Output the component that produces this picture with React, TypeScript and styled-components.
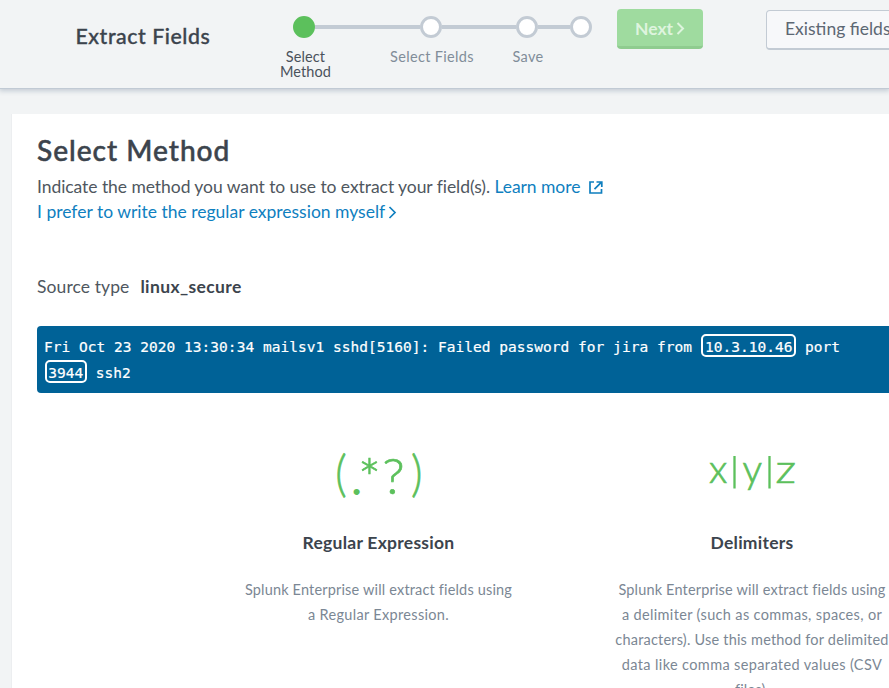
import React from 'react';
import styled, { createGlobalStyle } from 'styled-components';

const GlobalStyle = createGlobalStyle`
  * { box-sizing: border-box; }
  html, body { margin: 0; height: 688px; overflow: hidden; background: #f2f4f5; }
  body { font-family: Lato, "Open Sans", sans-serif; font-size: 17.5px; line-height: 25px; color: #3c444d; }
`;

const Page = styled.div`
  width: 889px;
  height: 688px;
  overflow: hidden;
  display: flex;
  flex-direction: column;
`;

const Header = styled.header`
  flex: none;
  height: 88px;
  display: flex;
  align-items: flex-start;
  box-shadow: 0 1px 0 #c1cad4, 0 2px 5px 1px #c3cbd4;
`;

const AppTitle = styled.h1`
  flex: none;
  margin: 23px 0 0;
  padding-left: 75.5px;
  width: 258px;
  font-size: 21.3px;
  line-height: 26px;
  font-weight: 500;
  letter-spacing: 0.55px;
  -webkit-text-stroke: 0.35px currentColor;
  white-space: nowrap;
`;

const Wizard = styled.nav`
  flex: none;
  width: 359px;
  padding-top: 16px;
`;

const Track = styled.div`
  display: flex;
  align-items: center;
  padding-left: 35px;
`;

const Dot = styled.span<{ $active?: boolean }>`
  flex: none;
  width: 22px;
  height: 22px;
  border-radius: 50%;
  border: 3px solid ${(p) => (p.$active ? '#5cc05c' : '#c3cbd4')};
  background: ${(p) => (p.$active ? '#5cc05c' : '#fff')};
`;

const Connector = styled.span<{ $length: number }>`
  flex: none;
  width: ${(p) => p.$length}px;
  height: 4px;
  background: #c3cbd4;
`;

const Labels = styled.div`
  display: flex;
  margin-top: 11px;
`;

const StepLabel = styled.span<{ $width: number; $active?: boolean }>`
  flex: none;
  width: ${(p) => p.$width}px;
  text-align: center;
  white-space: nowrap;
  font-size: 14.5px;
  line-height: 15px;
  letter-spacing: ${(p) => (p.$active ? 0.1 : 0.33)}px;
  color: ${(p) => (p.$active ? '#4a525b' : '#818d99')};
`;

const NextButton = styled.button`
  flex: none;
  margin: 9px 63px 0 0;
  width: 86px;
  height: 40px;
  border: 0;
  border-bottom: 3px solid #8fcc8f;
  border-radius: 4px;
  background: #9fdb9f;
  color: #def4de;
  display: flex;
  align-items: center;
  justify-content: center;
  gap: 3px;
  padding: 1px 0 0;
  font: 700 17.5px Lato, sans-serif;
`;

const ExistingButton = styled.button`
  flex: none;
  margin-top: 10px;
  width: 180px;
  height: 40px;
  padding: 0 0 3px 18px;
  text-align: left;
  border: 1px solid #c3cbd4;
  border-bottom-width: 2px;
  border-radius: 4px;
  background: #f7f8fa;
  color: #5c6773;
  font: 400 17.5px Lato, sans-serif;
  white-space: nowrap;
`;

const Panel = styled.main`
  flex: 1;
  margin: 26px 0 0 12px;
  padding: 19px 0 0 25px;
  background: #fff;
  box-shadow: -1px 0 0 #eceef0;
`;

const Heading = styled.h2`
  margin: 0 0 7px;
  font-size: 28.1px;
  line-height: 34px;
  font-weight: 500;
  letter-spacing: 0.98px;
  -webkit-text-stroke: 0.5px currentColor;
`;

const Line = styled.p<{ $spacing?: number }>`
  margin: 0;
  white-space: nowrap;
  color: #4f5760;
  letter-spacing: ${(p) => p.$spacing ?? 0}px;
`;

const Link = styled.a`
  color: #0f7fbf;
  text-decoration: none;
`;

const LinkIcon = styled.svg<{ $gap: number }>`
  margin-left: ${(p) => p.$gap}px;
  vertical-align: -1px;
`;

const SourceType = styled.div`
  margin-top: 50px;
  display: flex;
  gap: 11px;
  color: #4f5760;
  letter-spacing: 0.09px;
`;

const SourceValue = styled.strong`
  font-weight: 700;
  color: #3c444d;
  letter-spacing: 0.38px;
`;

const LogEvent = styled.div`
  margin-top: 27px;
  height: 67px;
  padding: 8px 0 0 7px;
  border-radius: 4px 0 0 4px;
  background: #006297;
  color: #fff;
  font: 14.5px/26px "DejaVu Sans Mono", monospace;
  letter-spacing: 0.026px;
  -webkit-text-stroke: 0.2px currentColor;
  white-space: nowrap;
`;

const Token = styled.span`
  display: inline-block;
  margin-left: 0.5px;
  padding: 3px 1.7px 0;
  line-height: 16px;
  border: 2px solid #fff;
  border-radius: 5px;
`;

const Methods = styled.div`
  margin: 52px 0 0 201.5px;
  display: grid;
  grid-template-columns: 280px 280px;
  column-gap: 93.5px;
  text-align: center;
`;

const Method = styled.section`
  display: flex;
  flex-direction: column;
  align-items: center;
`;

const MethodTitle = styled.h3`
  margin: 25px 0 22px;
  font-size: 17.5px;
  font-weight: 700;
  letter-spacing: 0.26px;
`;

const MethodText = styled.p`
  margin: 0;
  font-size: 14.5px;
  white-space: nowrap;
  color: #7b8794;
`;

const TextLine = styled.span<{ $spacing?: number }>`
  display: block;
  letter-spacing: ${(p) => p.$spacing ?? 0.17}px;
`;

const Glyph = styled.svg`
  display: block;
  font-family: Lato, sans-serif;
  font-weight: 300;
  fill: #5cc05c;
  stroke: #5cc05c;
  stroke-width: 0.7px;
`;

const Chevron = () => (
  <svg width="9" height="13" viewBox="0 0 9 13" fill="none" stroke="currentColor" strokeWidth="2">
    <path d="M1.5 1 7 6.5 1.5 12" />
  </svg>
);

export default function App() {
  return (
    <Page>
      <GlobalStyle />
      <Header>
        <AppTitle>Extract Fields</AppTitle>
        <Wizard>
          <Track>
            <Dot $active />
            <Connector $length={104.5} />
            <Dot />
            <Connector $length={74.5} />
            <Dot />
            <Connector $length={32} />
            <Dot />
          </Track>
          <Labels>
            <StepLabel $width={95} $active>Select<br />Method</StepLabel>
            <StepLabel $width={158}>Select Fields</StepLabel>
            <StepLabel $width={34}>Save</StepLabel>
          </Labels>
        </Wizard>
        <NextButton>Next <Chevron /></NextButton>
        <ExistingButton>Existing fields</ExistingButton>
      </Header>
      <Panel>
        <Heading>Select Method</Heading>
        <Line $spacing={-0.06}>
          Indicate the method you want to use to extract your field(s).{' '}
          <Link>
            Learn more
            <LinkIcon $gap={9} width="14" height="13" viewBox="0 0 14 13" fill="none" stroke="currentColor" strokeWidth="1.7">
              <path d="M5 1H1v11h11.5V8M7.5 1h5.3v5M12.5 1.2 5.5 8.2" />
            </LinkIcon>
          </Link>
        </Line>
        <Line>
          <Link>
            I prefer to write the regular expression myself
            <LinkIcon $gap={3} width="9" height="13" viewBox="0 0 9 13" fill="none" stroke="currentColor" strokeWidth="1.7">
              <path d="M1.5 1 7 6.5 1.5 12" />
            </LinkIcon>
          </Link>
        </Line>
        <SourceType>
          Source type <SourceValue>linux_secure</SourceValue>
        </SourceType>
        <LogEvent>
          Fri Oct 23 2020 13:30:34 mailsv1 sshd[5160]: Failed password for jira from <Token>10.3.10.46</Token> port
          <br />
          <Token>3944</Token> ssh2
        </LogEvent>
        <Methods>
          <Method>
            <Glyph width="100" height="60" viewBox="328 445 100 60">
              <text x="334.3" y="490.5" fontSize="49" textLength="11.5" lengthAdjust="spacingAndGlyphs">(</text>
              <text x="350.3" y="493.5" fontSize="46" strokeWidth="1.8">.</text>
              <text x="357" y="498" fontSize="54">*</text>
              <text x="381.5" y="493.5" fontSize="49" textLength="22" lengthAdjust="spacingAndGlyphs">?</text>
              <text x="410" y="490.5" fontSize="49" textLength="11.5" lengthAdjust="spacingAndGlyphs">)</text>
            </Glyph>
            <MethodTitle>Regular Expression</MethodTitle>
            <MethodText>
              <TextLine>Splunk Enterprise will extract fields using</TextLine>
              <TextLine $spacing={0.32}>a Regular Expression.</TextLine>
            </MethodText>
          </Method>
          <Method>
            <Glyph width="100" height="60" viewBox="702 445 100 60">
              <text x="709" y="482.5" fontSize="39">x</text>
              <path d="M734.5 456v32.5M769.5 456v32.5" strokeWidth="2.3" />
              <text x="742.5" y="482.5" fontSize="39">y</text>
              <text x="775.5" y="482.5" fontSize="39" textLength="20.5" lengthAdjust="spacingAndGlyphs">z</text>
            </Glyph>
            <MethodTitle>Delimiters</MethodTitle>
            <MethodText>
              <TextLine>Splunk Enterprise will extract fields using</TextLine>
              <TextLine $spacing={0.35}>a delimiter (such as commas, spaces, or</TextLine>
              <TextLine $spacing={0.2}>characters). Use this method for delimited</TextLine>
              <TextLine $spacing={0.37}>data like comma separated values (CSV</TextLine>
              <TextLine>files).</TextLine>
            </MethodText>
          </Method>
        </Methods>
      </Panel>
    </Page>
  );
}
